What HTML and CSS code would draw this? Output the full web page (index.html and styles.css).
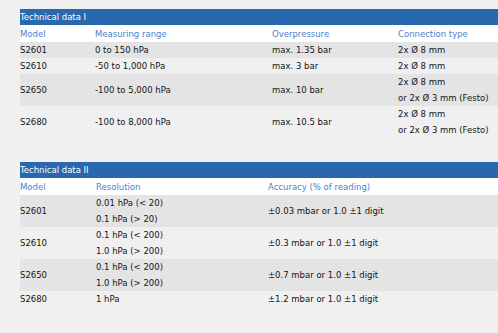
FILE: index.html
```html
<!DOCTYPE html>
<html lang="en">
<head>
  <meta charset="UTF-8">
  <title>Technical data</title>
  <link rel="stylesheet" href="styles.css">
</head>
<body>
  <div class="page">
    <table class="specs">
      <colgroup>
        <col class="c-model">
        <col class="c-range">
        <col class="c-over">
        <col class="c-conn">
      </colgroup>
      <thead>
        <tr class="title"><th colspan="4">Technical data I</th></tr>
        <tr class="head">
          <th>Model</th>
          <th>Measuring range</th>
          <th>Overpressure</th>
          <th>Connection type</th>
        </tr>
      </thead>
      <tbody>
        <tr class="odd">
          <td>S2601</td><td>0 to 150 hPa</td><td>max. 1.35 bar</td><td>2x Ø 8 mm</td>
        </tr>
        <tr>
          <td>S2610</td><td>-50 to 1,000 hPa</td><td>max. 3 bar</td><td>2x Ø 8 mm</td>
        </tr>
        <tr class="odd">
          <td>S2650</td><td>-100 to 5,000 hPa</td><td>max. 10 bar</td><td>2x Ø 8 mm<br>or 2x Ø 3 mm (Festo)</td>
        </tr>
        <tr>
          <td>S2680</td><td>-100 to 8,000 hPa</td><td>max. 10.5 bar</td><td>2x Ø 8 mm<br>or 2x Ø 3 mm (Festo)</td>
        </tr>
      </tbody>
    </table>

    <table class="specs">
      <colgroup>
        <col class="c-model2">
        <col class="c-res">
        <col class="c-acc">
      </colgroup>
      <thead>
        <tr class="title"><th colspan="3">Technical data II</th></tr>
        <tr class="head">
          <th>Model</th>
          <th>Resolution</th>
          <th>Accuracy (% of reading)</th>
        </tr>
      </thead>
      <tbody>
        <tr class="odd">
          <td>S2601</td><td>0.01 hPa (&lt; 20)<br>0.1 hPa (&gt; 20)</td><td>±0.03 mbar or 1.0 ±1 digit</td>
        </tr>
        <tr>
          <td>S2610</td><td>0.1 hPa (&lt; 200)<br>1.0 hPa (&gt; 200)</td><td>±0.3 mbar or 1.0 ±1 digit</td>
        </tr>
        <tr class="odd">
          <td>S2650</td><td>0.1 hPa (&lt; 200)<br>1.0 hPa (&gt; 200)</td><td>±0.7 mbar or 1.0 ±1 digit</td>
        </tr>
        <tr>
          <td>S2680</td><td>1 hPa</td><td>±1.2 mbar or 1.0 ±1 digit</td>
        </tr>
      </tbody>
    </table>
  </div>
</body>
</html>
```

FILE: styles.css
```css
body {
  margin: 0;
  padding: 0;
  background-color: #f0f0f0;
  font-family: 'DejaVu Sans', sans-serif;
  font-size: 8.5px;
  color: #141414;
}

.page {
  padding: 9px 0 0 20px;
}

.specs {
  width: 100%;
  table-layout: fixed;
  border-collapse: collapse;
  margin-bottom: 24px;
}

.c-model { width: 75px; }
.c-range { width: 177px; }
.c-over { width: 126px; }

.c-model2 { width: 76px; }
.c-res { width: 172px; }

th, td {
  padding: 0;
  text-align: left;
  font-weight: normal;
  line-height: 16px;
  vertical-align: middle;
  white-space: nowrap;
}

.title th {
  background-color: #2a68ae;
  color: #ffffff;
  height: 16px;
}

.head th {
  background-color: #ffffff;
  color: #4a7fcf;
  height: 17px;
}

.odd td {
  background-color: #e4e4e4;
}

td {
  height: 16px;
}
```
